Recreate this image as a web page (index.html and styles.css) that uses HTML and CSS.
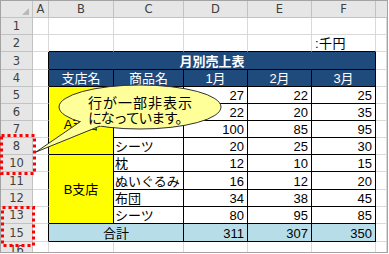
FILE: index.html
```html
<!DOCTYPE html>
<html lang="ja">
<head>
<meta charset="utf-8">
<link rel="stylesheet" href="styles.css">
</head>
<body>
<div class="wrap">
  <div class="sheet">
    <div class="grid">
      <div class="h corner"><span class="tri"></span></div>
      <div class="h">A</div><div class="h">B</div><div class="h">C</div><div class="h">D</div><div class="h">E</div><div class="h">F</div><div class="h g"></div>

      <div class="h rh">1</div><div></div><div></div><div></div><div></div><div></div><div></div><div></div>

      <div class="h rh">2</div><div></div><div class="et"></div><div class="et"></div><div class="et"></div><div class="et"></div><div class="et unit">:千円</div><div></div>

      <div class="h rh">3</div><div class="el"></div><div class="t title">月別売上表</div><div></div>

      <div class="h rh">4</div><div class="el"></div><div class="t th">支店名</div><div class="t th">商品名</div><div class="t th">1月</div><div class="t th">2月</div><div class="t th">3月</div><div></div>

      <div class="h rh">5</div><div class="el"></div><div class="t br a">A支店</div><div class="t item"></div><div class="t num">27</div><div class="t num">22</div><div class="t num">25</div><div></div>
      <div class="h rh">6</div><div class="el"></div><div class="t item"></div><div class="t num">22</div><div class="t num">20</div><div class="t num">35</div><div></div>
      <div class="h rh">7</div><div class="el"></div><div class="t item"></div><div class="t num">100</div><div class="t num">85</div><div class="t num">95</div><div></div>
      <div class="h rh">8</div><div class="el"></div><div class="t item">シーツ</div><div class="t num">20</div><div class="t num">25</div><div class="t num">30</div><div></div>

      <div class="h rh">10</div><div class="el"></div><div class="t br">B支店</div><div class="t item">枕</div><div class="t num">12</div><div class="t num">10</div><div class="t num">15</div><div></div>
      <div class="h rh">11</div><div class="el"></div><div class="t item">ぬいぐるみ</div><div class="t num">16</div><div class="t num">12</div><div class="t num">20</div><div></div>
      <div class="h rh">12</div><div class="el"></div><div class="t item">布団</div><div class="t num">34</div><div class="t num">38</div><div class="t num">45</div><div></div>
      <div class="h rh">13</div><div class="el"></div><div class="t item">シーツ</div><div class="t num">80</div><div class="t num">95</div><div class="t num">85</div><div></div>

      <div class="h rh">15</div><div class="el"></div><div class="t sum label">合計</div><div class="t sum num">311</div><div class="t sum num">307</div><div class="t sum num">350</div><div></div>

      <div class="h rh">16</div><div></div><div></div><div></div><div></div><div></div><div></div><div></div>
    </div>
  </div>

  <svg class="overlay" width="389" height="254" viewBox="0 0 389 254">
    <rect x="1.5" y="135.5" width="33" height="38" fill="none" stroke="#ff0000" stroke-width="3" stroke-dasharray="3 3"/>
    <rect x="2.5" y="207.5" width="31" height="38" fill="none" stroke="#ff0000" stroke-width="3" stroke-dasharray="3 3"/>
    <ellipse cx="140" cy="107" rx="81" ry="22" fill="#ffff99" stroke="#303030" stroke-width="1"/>
    <polygon points="36,152 84,119 92,115 104,124.4" fill="#ffff99"/>
    <polyline points="80.5,121.5 36,152 100,126" fill="none" stroke="#303030" stroke-width="1"/>
  </svg>
  <div class="callout">
    <span class="l1">行が一部非表示</span>
    <span class="l2">になっています。</span>
  </div>
</div>
</body>
</html>
```

FILE: styles.css
```css
body {
  margin: 0;
  background: #ffffff;
}

.wrap {
  position: relative;
  width: 389px;
  height: 254px;
}

.sheet {
  width: 388px;
  height: 253px;
  box-sizing: border-box;
  border: 1px solid #a3a3a3;
  overflow: hidden;
  background: #ffffff;
  font-family: "Liberation Sans", "Noto Sans CJK JP", sans-serif;
  font-size: 13px;
  color: #000000;
}

.grid {
  display: grid;
  grid-template-columns: 32px 16px 65px 70px 64px 64px 64px 1fr;
  grid-template-rows: 17px 17px 17px 18px 17px 17px 17px 17px 17px 17px 18px 17px 17px 18px 17px;
}

.grid > div {
  box-sizing: border-box;
  display: flex;
  align-items: center;
  border-right: 1px solid #d9d9d9;
  border-bottom: 1px solid #d9d9d9;
  overflow: hidden;
  white-space: nowrap;
  line-height: 15px;
  padding-top: 1px;
}

.grid > .h {
  justify-content: center;
  background: #e6e6e6;
  border-color: #c2c2c2;
  color: #404040;
  font-family: "DejaVu Sans", sans-serif;
  font-size: 11.5px;
}

.grid > .g {
  border-right: none;
}

.grid > .corner {
  justify-content: flex-end;
  align-items: flex-end;
  padding: 0 3px 2px 0;
}

.tri {
  width: 0;
  height: 0;
  border-left: 7px solid transparent;
  border-bottom: 7px solid #b9b9b9;
}

.grid > .et {
  border-bottom-color: #000000;
}

.grid > .el {
  border-right-color: #000000;
}

.grid > .unit {
  padding-left: 3px;
  letter-spacing: 0.5px;
}

.grid > .t {
  border-color: #000000;
}

.grid > .title {
  grid-column: span 5;
  justify-content: center;
  background: #1f4a7c;
  color: #ffffff;
  font-weight: bold;
}

.grid > .th {
  justify-content: center;
  background: #1f4a7c;
  color: #ffffff;
}

.grid > .br {
  grid-row: span 4;
  justify-content: center;
  background: #ffff00;
}

.grid > .a {
  padding-top: 8px;
}

.grid > .item {
  padding-left: 1px;
}

.grid > .num {
  justify-content: flex-end;
  padding-right: 3px;
}

.grid > .sum {
  background: #b7dee8;
}

.grid > .label {
  grid-column: span 2;
  justify-content: center;
}

.overlay {
  position: absolute;
  left: 0;
  top: 0;
}

.callout {
  position: absolute;
  left: 88px;
  top: 95px;
  font-family: "Noto Sans CJK JP", sans-serif;
  font-size: 14px;
  line-height: 15px;
  color: #000000;
}

.callout span {
  display: block;
  white-space: nowrap;
}

.callout .l1 {
  letter-spacing: 1px;
}

.callout .l2 {
  letter-spacing: -1.2px;
}
```
